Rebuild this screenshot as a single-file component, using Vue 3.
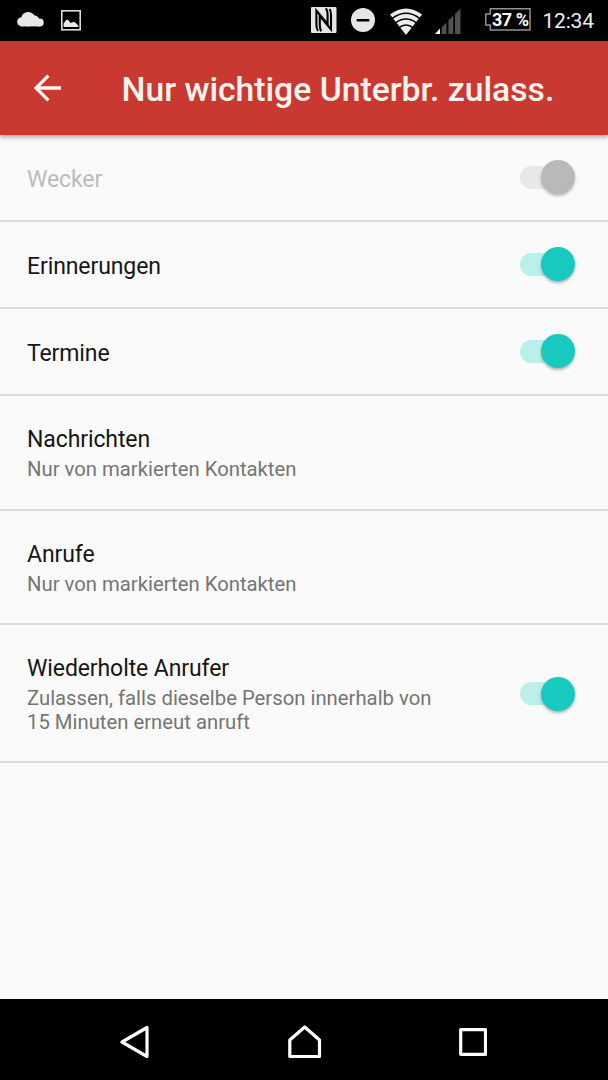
<script setup>
const rows = [
  { title: 'Wecker', toggle: true, disabled: true },
  { title: 'Erinnerungen', toggle: true },
  { title: 'Termine', toggle: true },
  { title: 'Nachrichten', lines: ['Nur von markierten Kontakten'] },
  { title: 'Anrufe', lines: ['Nur von markierten Kontakten'] },
  {
    title: 'Wiederholte Anrufer',
    lines: ['Zulassen, falls dieselbe Person innerhalb von', '15 Minuten erneut anruft'],
    toggle: true,
  },
]
</script>

<template>
  <div class="screen">
    <div class="status">
      <svg class="cloud" width="28" height="16" viewBox="0 0 28 16">
        <g fill="#e8e8e8">
          <circle cx="4.8" cy="9.8" r="4.6" />
          <circle cx="11.2" cy="7.2" r="7.2" />
          <circle cx="17" cy="8.6" r="5.4" />
          <circle cx="22.7" cy="10.4" r="4" />
          <rect x="4.8" y="8" width="17.9" height="6.4" />
        </g>
      </svg>
      <svg class="picture" width="20" height="21" viewBox="0 0 20 21">
        <rect x=".8" y=".8" width="18.4" height="19" fill="none" stroke="#dcdcdc" stroke-width="1.6" />
        <path d="M2.6 17V13.5L5.4 9.8 7 9.8 9.5 13 11.5 12.2 13.3 11.8 17.3 15.4V17Z" fill="#e8e8e8" />
      </svg>
      <svg class="nfc" width="26" height="26" viewBox="0 0 26 26">
        <rect width="25.5" height="26" rx="1" fill="#e6e6e6" />
        <path d="M7 24Q5.4 21.5 5.4 17.5V3.6L16.6 17V8Q16.6 4 15 1.2" fill="none" stroke="#000" stroke-width="2.1" />
        <path d="M10.2 24.2Q8.8 21.5 8.8 18V9L20 22.4V8Q20 4.3 18.6 2" fill="none" stroke="#000" stroke-width="2.1" />
      </svg>
      <svg class="dnd" width="24" height="24" viewBox="0 0 24 24">
        <circle cx="12" cy="12" r="12" fill="#e6e6e6" />
        <rect x="5.7" y="11" width="12.6" height="2.5" fill="#000" />
      </svg>
      <svg class="wifi" width="32" height="27" viewBox="0 0 32 27">
        <path d="M0 6.5Q16-5.5 32 6.5L16 27Z" fill="#ececec" />
        <g fill="none" stroke="#000" stroke-width="1.6">
          <path d="M2 10.6Q16-.1 30 10.6" />
          <path d="M5 15.3Q16 6.8 27 15.3" />
          <path d="M8.5 20Q16 14 23.5 20" />
        </g>
      </svg>
      <svg class="signal" width="27" height="27" viewBox="0 0 27 27">
        <path d="M0 26 5 20.5V26Z" fill="#fff" />
        <path d="M6.7 26V19.2L11.5 14.4V26ZM13.4 26V12.6L18.3 7.6V26ZM20 26V6L25.5.4V26Z" fill="#505050" />
      </svg>
      <div class="battery">
        <svg width="46" height="23" viewBox="0 0 46 23">
          <path d="M5.3.8H45V21.9H5.3V17H.8V6H5.3Z" fill="none" stroke="#929292" stroke-width="1.5" />
        </svg>
        <span class="percent">37 %</span>
      </div>
      <span class="clock">12:34</span>
    </div>

    <header class="bar">
      <svg class="back" width="28" height="28" viewBox="0 0 28 28">
        <path d="M27 14H2M14.4 1.6 2 14 14.4 26.4" fill="none" stroke="#fff5f0" stroke-width="3.3" />
      </svg>
      <h1>Nur wichtige Unterbr. zulass.</h1>
    </header>

    <main>
      <section v-for="row in rows" :key="row.title" class="row" :class="{ detail: row.lines, disabled: row.disabled }">
        <div class="text">
          <div class="title">{{ row.title }}</div>
          <div v-if="row.lines" class="summary">
            <div v-for="line in row.lines" :key="line">{{ line }}</div>
          </div>
        </div>
        <div v-if="row.toggle" class="toggle"><i class="thumb"></i></div>
      </section>
    </main>

    <nav>
      <svg width="30" height="34" viewBox="0 0 30 34">
        <path d="M2 17 27 2.5V31.5Z" fill="none" stroke="#fff" stroke-width="3.2" stroke-linejoin="round" />
      </svg>
      <svg width="34" height="34" viewBox="0 0 34 34">
        <path d="M1.8 15 16.7 2 31.5 15V31.5H1.8Z" fill="none" stroke="#fff" stroke-width="3.2" stroke-linejoin="round" />
      </svg>
      <svg width="28" height="28" viewBox="0 0 28 28">
        <rect x="1.7" y="1.7" width="24.8" height="24.6" fill="none" stroke="#fff" stroke-width="3.2" stroke-linejoin="round" />
      </svg>
    </nav>
  </div>
</template>

<style>
body {
  margin: 0;
  background: #fafafa;
}
</style>

<style scoped>
.screen {
  width: 608px;
  height: 1080px;
  display: flex;
  flex-direction: column;
  background: #fafafa;
  font-family: Roboto, "Liberation Sans", sans-serif;
  overflow: hidden;
}
svg {
  display: block;
  flex: none;
}
.status {
  height: 41px;
  flex: none;
  display: flex;
  align-items: flex-start;
  background: #000;
}
.cloud { margin: 12px 0 0 17px; }
.picture { margin: 10px 0 0 16px; }
.nfc { margin: 7px 0 0 230px; }
.dnd { margin: 8px 0 0 14px; }
.wifi { margin: 8px 0 0 15px; }
.signal { margin: 8px 0 0 13px; }
.battery {
  position: relative;
  margin: 8px 0 0 23px;
}
.percent {
  position: absolute;
  left: 7px;
  top: 1px;
  font-size: 18px;
  line-height: 22px;
  font-weight: 700;
  letter-spacing: -0.5px;
  color: #fff;
  white-space: nowrap;
}
.clock {
  margin: 8px 0 0 11.5px;
  font-size: 21px;
  letter-spacing: -0.2px;
  line-height: 26px;
  color: #eee;
}
.bar {
  position: relative;
  height: 94px;
  flex: none;
  display: flex;
  background: #ca3931;
  box-shadow: 0 2px 5px rgba(60, 20, 40, 0.4);
}
.back { margin: 33px 0 0 34px; }
h1 {
  margin: 29px 0 0 59.5px;
  font-size: 33.7px;
  line-height: 40px;
  font-weight: 500;
  color: #fff3ee;
  white-space: nowrap;
}
main { flex: 1; }
.row {
  box-sizing: border-box;
  height: 87px;
  padding: 0 33px 0 27px;
  display: flex;
  align-items: center;
  justify-content: space-between;
  border-bottom: 2px solid #dcdcdc;
}
.row.detail {
  height: auto;
  padding-top: 29px;
  padding-bottom: 27px;
}
.row:not(.detail) .text { padding-top: 4px; }
.title {
  font-size: 23px;
  letter-spacing: -0.1px;
  line-height: 30px;
  color: #161616;
  white-space: nowrap;
}
.summary {
  padding-top: 3px;
  font-size: 20.3px;
  line-height: 23.5px;
  color: #757575;
  white-space: nowrap;
}
.disabled .title { color: #bcbcbc; }
.toggle {
  width: 55px;
  height: 34px;
  flex: none;
  margin-bottom: 1px;
  display: flex;
  align-items: center;
  justify-content: flex-end;
}
.toggle::before {
  content: "";
  width: 40px;
  height: 23px;
  margin-right: -19px;
  border-radius: 12px;
  background: #bbefe9;
}
.thumb {
  position: relative;
  width: 34px;
  height: 34px;
  border-radius: 50%;
  background: #18c9c0;
  box-shadow: 0 2px 3px rgba(0, 60, 60, 0.35);
}
.disabled .toggle::before { background: #e8e8e8; }
.disabled .thumb {
  background: #b9b9b9;
  box-shadow: 0 2px 3px rgba(0, 0, 0, 0.25);
}
nav {
  box-sizing: border-box;
  height: 81px;
  flex: none;
  padding: 5px 121px 0 120px;
  display: flex;
  align-items: center;
  justify-content: space-between;
  background: #000;
}
</style>
